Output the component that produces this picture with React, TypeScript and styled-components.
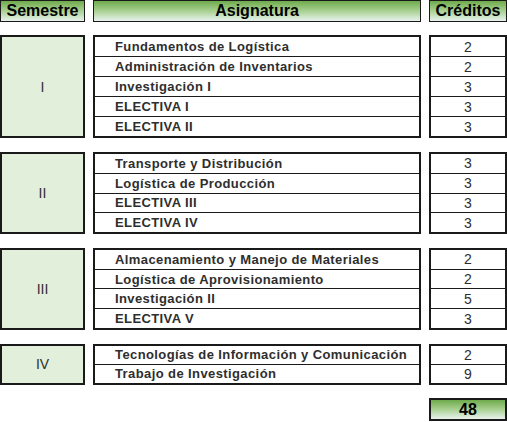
import React from 'react';
import styled, { createGlobalStyle } from 'styled-components';

const GlobalStyle = createGlobalStyle`
  body {
    margin: 0;
    background: #ffffff;
  }
`;

const PITCH = 20.667;

type Semester = {
  label: string;
  subjects: { name: string; credits: number }[];
};

const plan: Semester[] = [
  {
    label: 'I',
    subjects: [
      { name: 'Fundamentos de Logística', credits: 2 },
      { name: 'Administración de Inventarios', credits: 2 },
      { name: 'Investigación I', credits: 3 },
      { name: 'ELECTIVA I', credits: 3 },
      { name: 'ELECTIVA II', credits: 3 },
    ],
  },
  {
    label: 'II',
    subjects: [
      { name: 'Transporte y Distribución', credits: 3 },
      { name: 'Logística de Producción', credits: 3 },
      { name: 'ELECTIVA III', credits: 3 },
      { name: 'ELECTIVA IV', credits: 3 },
    ],
  },
  {
    label: 'III',
    subjects: [
      { name: 'Almacenamiento y Manejo de Materiales', credits: 2 },
      { name: 'Logística de Aprovisionamiento', credits: 2 },
      { name: 'Investigación II', credits: 5 },
      { name: 'ELECTIVA V', credits: 3 },
    ],
  },
  {
    label: 'IV',
    subjects: [
      { name: 'Tecnologías de Información y Comunicación', credits: 2 },
      { name: 'Trabajo de Investigación', credits: 9 },
    ],
  },
];

const Page = styled.div`
  width: 507px;
  display: flex;
  flex-direction: column;
  font-family: 'Liberation Sans', Arial, sans-serif;
  color: #2e2e2e;
`;

const Line = styled.div<{ $gap?: number; $height: number }>`
  display: grid;
  grid-template-columns: 85px 328px 78px;
  column-gap: 8px;
  margin-top: ${(p) => p.$gap ?? 0}px;
  height: ${(p) => p.$height}px;
`;

const HeaderCell = styled.div`
  box-sizing: border-box;
  border: 1.5px solid #1a1a1a;
  background: linear-gradient(to bottom, #6eaa4c 0%, #a3cd8a 45%, #d6e9d3 85%, #e6f1ea 100%);
  display: flex;
  align-items: center;
  justify-content: center;
  font-size: 16px;
  font-weight: bold;
  color: #000000;
`;

const SemesterCell = styled.div`
  box-sizing: border-box;
  border: 2px solid #1a1a1a;
  background: #e2efda;
  display: flex;
  align-items: center;
  justify-content: center;
  font-size: 14px;
`;

const Stack = styled.div`
  box-sizing: border-box;
  border: 2px solid #1a1a1a;
  display: flex;
  flex-direction: column;
`;

const Row = styled.div<{ $center?: boolean }>`
  flex: 1;
  display: flex;
  align-items: center;
  justify-content: ${(p) => (p.$center ? 'center' : 'flex-start')};
  padding-left: ${(p) => (p.$center ? 0 : 20)}px;
  font-size: ${(p) => (p.$center ? 14 : 13)}px;
  font-weight: ${(p) => (p.$center ? 'normal' : 'bold')};
  letter-spacing: ${(p) => (p.$center ? 0 : 0.4)}px;
  white-space: nowrap;
  & + & {
    border-top: 1px solid #1a1a1a;
  }
`;

const Empty = styled.div``;

const TotalCell = styled(HeaderCell)`
  border-width: 2px;
`;

const App: React.FC = () => {
  const total = plan.reduce(
    (sum, s) => sum + s.subjects.reduce((a, b) => a + b.credits, 0),
    0,
  );

  return (
    <>
      <GlobalStyle />
      <Page>
        <Line $height={22}>
          <HeaderCell>Semestre</HeaderCell>
          <HeaderCell>Asignatura</HeaderCell>
          <HeaderCell>Créditos</HeaderCell>
        </Line>
        {plan.map((sem, i) => (
          <Line
            key={sem.label}
            $gap={i === 0 ? 13 : 13.333}
            $height={sem.subjects.length * PITCH}
          >
            <SemesterCell>{sem.label}</SemesterCell>
            <Stack>
              {sem.subjects.map((s) => (
                <Row key={s.name}>{s.name}</Row>
              ))}
            </Stack>
            <Stack>
              {sem.subjects.map((s) => (
                <Row key={s.name} $center>
                  {s.credits}
                </Row>
              ))}
            </Stack>
          </Line>
        ))}
        <Line $gap={13.333} $height={23}>
          <Empty />
          <Empty />
          <TotalCell>{total}</TotalCell>
        </Line>
      </Page>
    </>
  );
};

export default App;
